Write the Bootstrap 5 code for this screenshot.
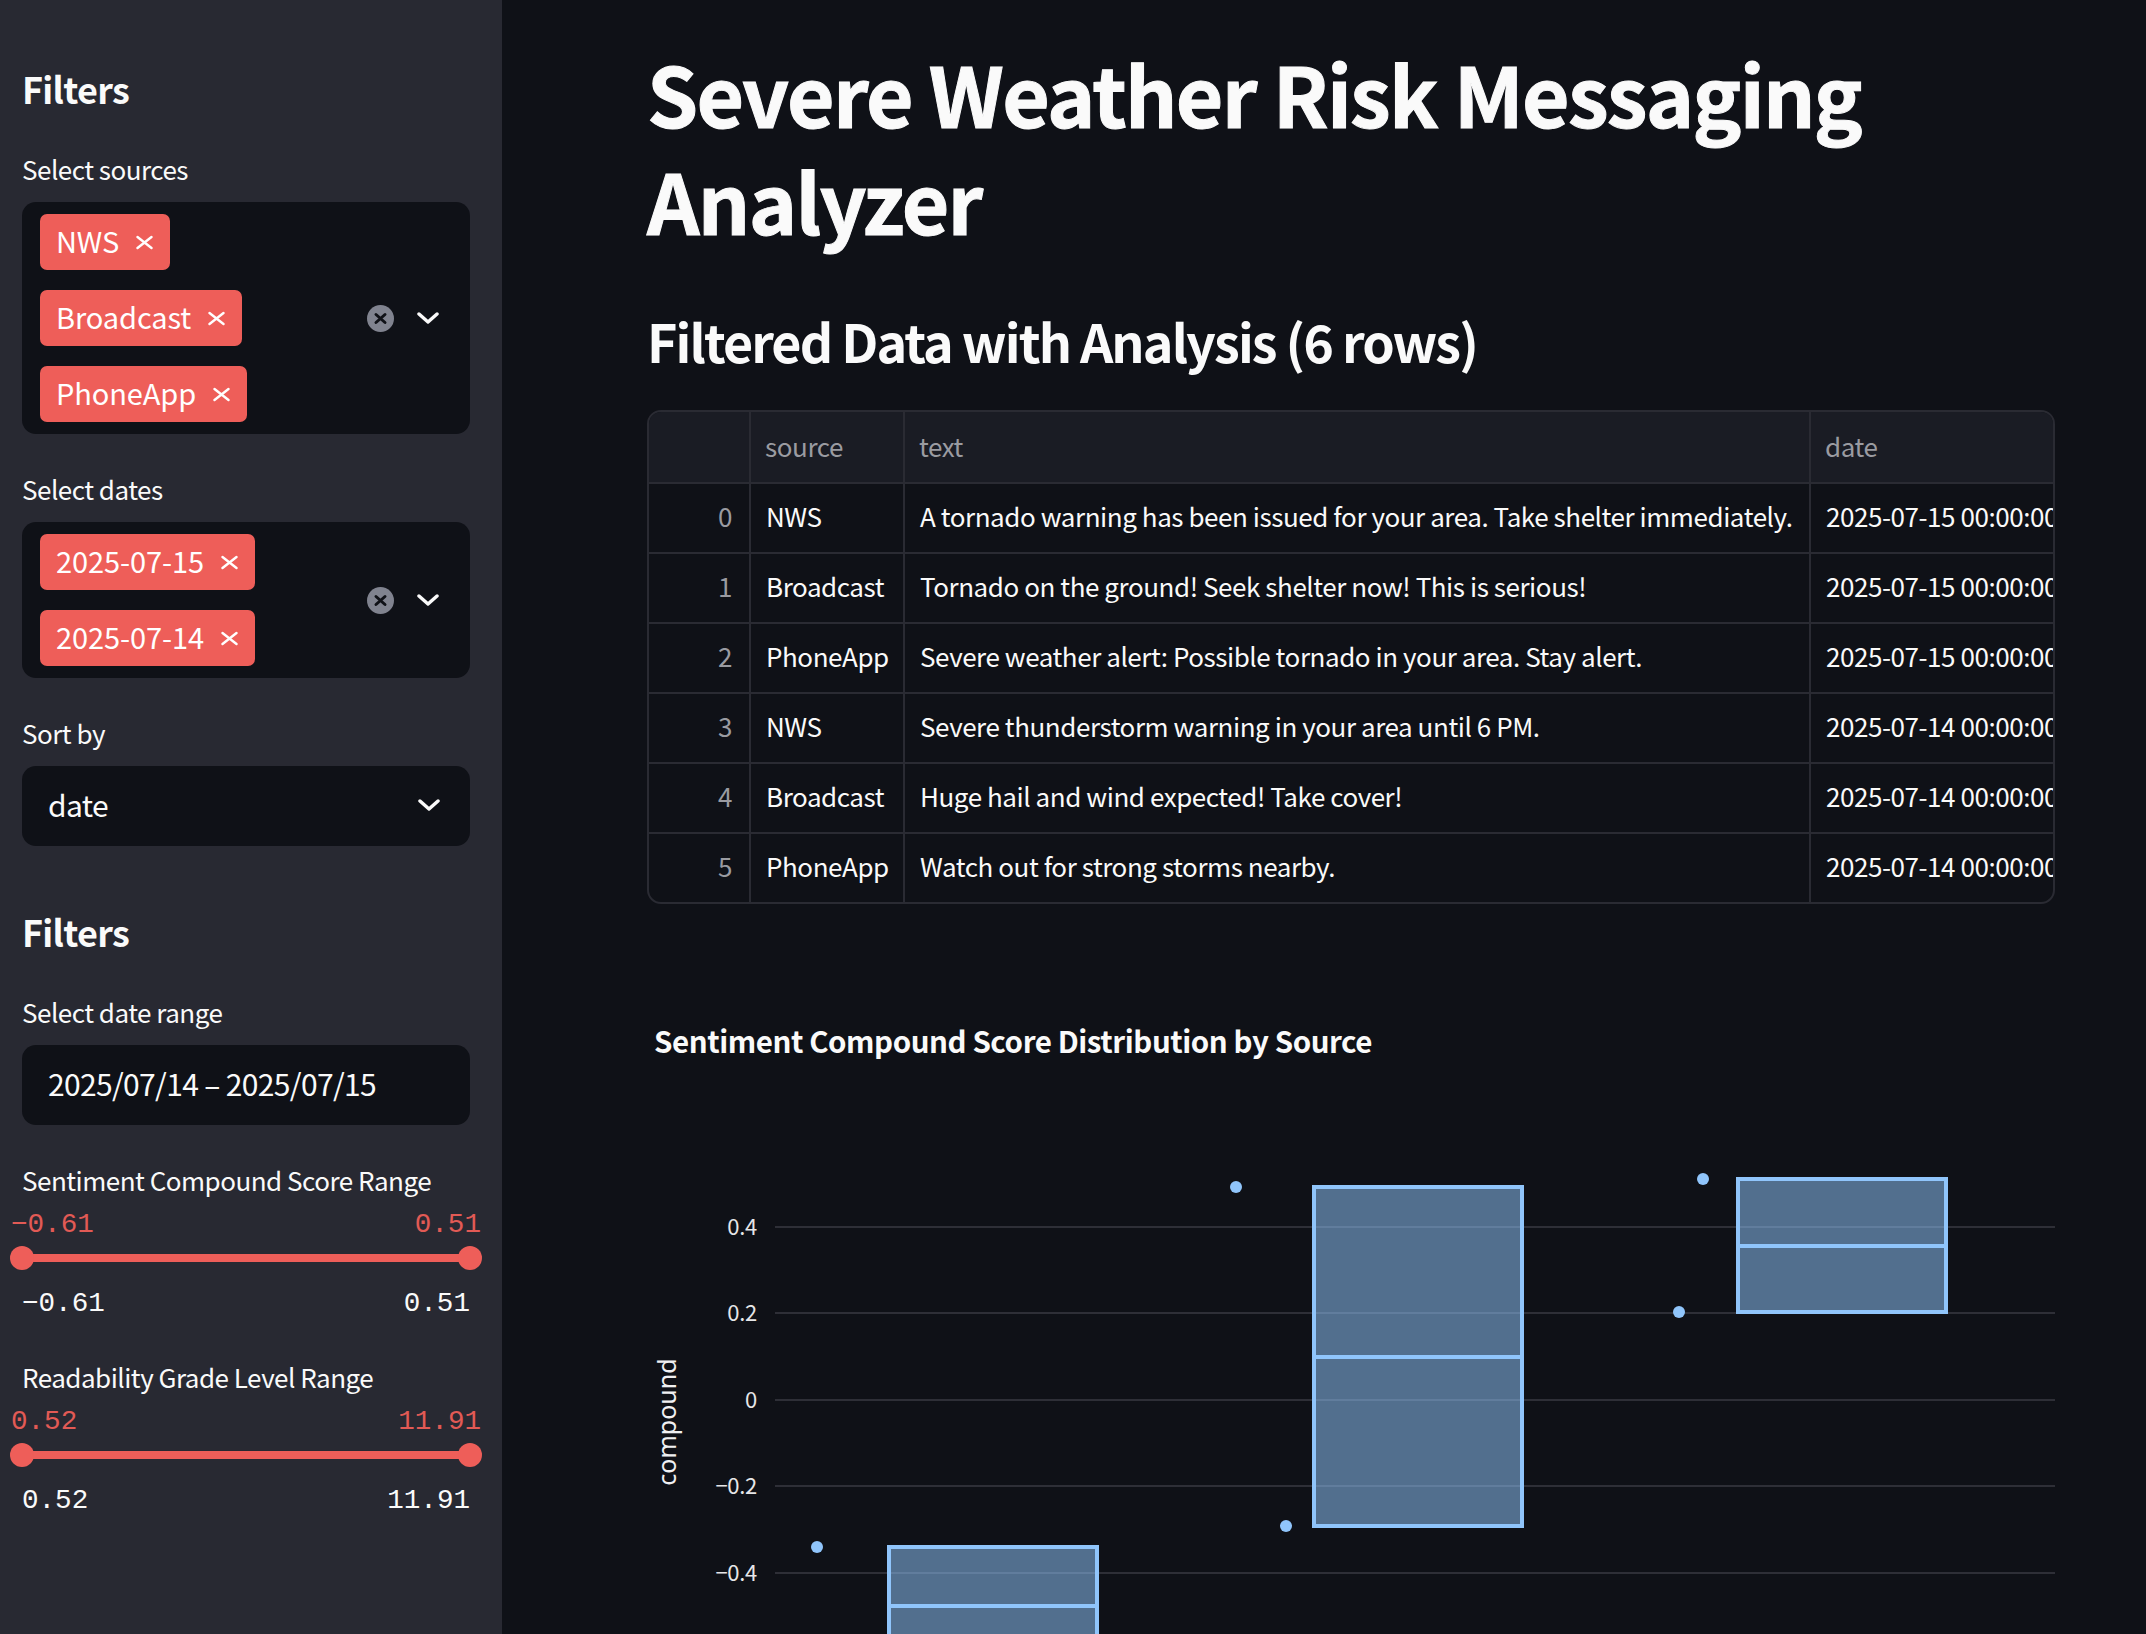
<!DOCTYPE html>
<html lang="en">
<head>
    <meta charset="UTF-8">
    <meta name="viewport" content="width=device-width, initial-scale=1.0">
    <title>Severe Weather Risk Messaging Analyzer</title>
    <link href="https://cdn.jsdelivr.net/npm/bootstrap@5.3.0/dist/css/bootstrap.min.css" rel="stylesheet">
    <style>
        html, body { height: 100%; }
        body { background: #0f1117; color: #fafafa; font-family: "Noto Sans CJK SC", "Noto Sans", sans-serif; overflow: hidden; }
        .side-pane { width: 502px; height: 1634px; flex: none; background: #282932; padding: 61px 32px 0 22px; z-index: 1; }
        .main-pane { flex: 1; min-width: 0; height: 1634px; padding: 39px 91px 0 647px; margin-left: -502px; overflow: hidden; }
        .side-title { font-size: 36px; font-weight: 700; letter-spacing: -0.7px; line-height: 54px; margin: 0 0 37px; }
        .side-title.second { margin: 58px 0 37px; }
        .field-label { font-size: 26px; letter-spacing: -0.5px; line-height: 34px; margin: 0 0 16px; }
        .field-label.spaced { margin-top: 38px; }
        .select-box { background: #0f1117; border-radius: 14px; padding: 12px 18px; }
        .tag-stack { gap: 20px; }
        .pill { background: #ee5e59; color: #fff; border-radius: 7px; height: 56px; padding: 0 17px 2px 16px; font-size: 29px; letter-spacing: -0.1px; gap: 17px; }
        .pill-x { width: 17px; height: 17px; margin-top: 2px; }
        .clear-ico { width: 27px; height: 27px; margin-right: 23px; }
        .chev-ico { width: 22px; height: 14px; margin-right: 13px; }
        .single-box { height: 80px; padding: 0 30px 3px 26px; font-size: 30px; letter-spacing: -0.65px; }
        .range-block { margin-top: 37px; }
        .range-block + .range-block { margin-top: 40px; }
        .range-block .field-label { line-height: 36px; margin-bottom: 12px; }
        .range-head { font-family: "Liberation Mono", monospace; font-size: 27.6px; line-height: 30px; color: #e25a55; margin: 0 -11px; }
        .range-track { height: 8px; background: #ee5e59; margin: 14px 0 0; }
        .range-knob { width: 24px; height: 24px; flex: none; border-radius: 50%; background: #ee5e59; margin: 0 -12px; }
        .range-foot { font-family: "Liberation Mono", monospace; font-size: 27.6px; line-height: 30px; margin-top: 27px; }
        .page-title { font-size: 82px; font-weight: 700; line-height: 107px; letter-spacing: -1.7px; -webkit-text-stroke: 1px #fafafa; margin: 0; }
        .sub-title { font-size: 52px; font-weight: 700; line-height: 72px; letter-spacing: -1.9px; margin: 52px 0 33px; }
        .grid-wrap { width: 1408px; height: 494px; border: 2px solid #2a2b33; border-radius: 14px; overflow: hidden; }
        .data-grid { table-layout: fixed; width: 1408px; margin: 0; --bs-table-bg: transparent; --bs-table-color: #fafafa; border-collapse: collapse; font-size: 26px; letter-spacing: -0.44px; }
        .data-grid th, .data-grid td { border: 2px solid #2a2b33; padding: 0 0 5px 15px; height: 70px; line-height: 1; white-space: nowrap; overflow: hidden; vertical-align: middle; font-weight: 400; border-top: 0; border-left: 0; }
        .data-grid th { background: #1a1c24; color: #9a9ba1; height: 71px; padding: 0 0 3px 14px; }
        .data-grid .row-no { text-align: right; color: #9a9ba1; padding: 0 17px 5px 0; }
        .chart-wrap { margin-top: 94px; margin-left: -647px; }
        .chart-wrap svg { display: block; }
        .chart-title { font-size: 29.5px; font-weight: 700; letter-spacing: -0.43px; fill: #fafafa; font-family: "Noto Sans CJK SC", sans-serif; }
        .chart-tick { font-size: 22px; letter-spacing: -0.3px; fill: #e6e6e8; font-family: "Noto Sans CJK SC", sans-serif; }
        .chart-axis { font-size: 25px; fill: #f0f0f2; font-family: "Noto Sans", sans-serif; }
    </style>
</head>
<body>
    <div class="d-flex">
        <div class="side-pane position-relative">
            <h2 class="side-title">Filters</h2>

            <p class="field-label">Select sources</p>
            <div class="select-box d-flex align-items-center" id="sourceBox"></div>

            <p class="field-label spaced">Select dates</p>
            <div class="select-box d-flex align-items-center" id="dateBox"></div>

            <p class="field-label spaced">Sort by</p>
            <div class="select-box single-box d-flex align-items-center justify-content-between">
                <span>date</span>
                <svg class="chev-ico m-0" viewBox="0 0 22 14"><path d="M2 3l9 8 9-8" fill="none" stroke="#fafafa" stroke-width="3.4" stroke-linecap="round" stroke-linejoin="round"/></svg>
            </div>

            <h2 class="side-title second">Filters</h2>
            <p class="field-label">Select date range</p>
            <div class="select-box single-box d-flex align-items-center">2025/07/14 – 2025/07/15</div>

            <div id="rangeList"></div>
        </div>

        <div class="main-pane">
            <h1 class="page-title">Severe Weather Risk Messaging<br>Analyzer</h1>
            <h3 class="sub-title">Filtered Data with Analysis (6 rows)</h3>
            <div class="grid-wrap">
                <table class="table data-grid">
                    <colgroup><col style="width:101px"><col style="width:154px"><col style="width:906px"><col style="width:247px"></colgroup>
                    <thead><tr><th></th><th>source</th><th>text</th><th>date</th></tr></thead>
                    <tbody id="gridBody"></tbody>
                </table>
            </div>
            <div class="chart-wrap">
                <svg width="2146" height="700" viewBox="0 0 2146 700" id="boxChart"></svg>
            </div>
        </div>
    </div>

    <script src="https://cdn.jsdelivr.net/npm/bootstrap@5.3.0/dist/js/bootstrap.bundle.min.js"></script>
    <script>
        const rows = [
            ['NWS', 'A tornado warning has been issued for your area. Take shelter immediately.', '2025-07-15'],
            ['Broadcast', 'Tornado on the ground! Seek shelter now! This is serious!', '2025-07-15'],
            ['PhoneApp', 'Severe weather alert: Possible tornado in your area. Stay alert.', '2025-07-15'],
            ['NWS', 'Severe thunderstorm warning in your area until 6 PM.', '2025-07-14'],
            ['Broadcast', 'Huge hail and wind expected! Take cover!', '2025-07-14'],
            ['PhoneApp', 'Watch out for strong storms nearby.', '2025-07-14']
        ];
        document.getElementById('gridBody').innerHTML = rows.map((r, i) =>
            `<tr><td class="row-no">${i}</td><td>${r[0]}</td><td>${r[1]}</td><td>${r[2]} 00:00:00</td></tr>`
        ).join('');

        const pillX = '<svg class="pill-x" viewBox="0 0 17 17"><path d="M1.5 3l14 11M15.5 3l-14 11" stroke="#fff" stroke-width="2.4" stroke-linecap="round"/></svg>';
        const controls = `<div class="ms-auto d-flex align-items-center">
            <svg class="clear-ico" viewBox="0 0 27 27"><circle cx="13.5" cy="13.5" r="13.5" fill="#80838f"/><path d="M9 9.5l9 8M18 9.5l-9 8" stroke="#0f1117" stroke-width="3" stroke-linecap="round"/></svg>
            <svg class="chev-ico" viewBox="0 0 22 14"><path d="M2 3l9 8 9-8" fill="none" stroke="#fafafa" stroke-width="3.4" stroke-linecap="round" stroke-linejoin="round"/></svg>
        </div>`;
        function fillBox(id, items) {
            const pills = items.map(t => `<span class="pill d-inline-flex align-items-center">${t}${pillX}</span>`).join('');
            document.getElementById(id).innerHTML = `<div class="tag-stack d-flex flex-column align-items-start">${pills}</div>${controls}`;
        }
        fillBox('sourceBox', ['NWS', 'Broadcast', 'PhoneApp']);
        fillBox('dateBox', ['2025-07-15', '2025-07-14']);

        document.getElementById('rangeList').innerHTML = [
            ['Sentiment Compound Score Range', '−0.61', '0.51'],
            ['Readability Grade Level Range', '0.52', '11.91']
        ].map(s => `<div class="range-block">
            <p class="field-label">${s[0]}</p>
            <div class="range-head d-flex justify-content-between"><span>${s[1]}</span><span>${s[2]}</span></div>
            <div class="range-track d-flex justify-content-between align-items-center"><span class="range-knob"></span><span class="range-knob"></span></div>
            <div class="range-foot d-flex justify-content-between"><span>${s[1]}</span><span>${s[2]}</span></div>
        </div>`).join('');

        // chart coordinates are page pixels minus the top of the svg
        const svg = document.getElementById('boxChart');
        const top0 = 998;
        const yOf = v => v - top0;
        let out = `<text class="chart-title" x="654" y="${yOf(1053)}">Sentiment Compound Score Distribution by Source</text>`;
        [[1227, '0.4'], [1313, '0.2'], [1400, '0'], [1486, '−0.2'], [1573, '−0.4']].forEach(g => {
            out += `<line x1="775" x2="2055" y1="${yOf(g[0])}" y2="${yOf(g[0])}" stroke="#2e2f37" stroke-width="2"/>`;
            out += `<text class="chart-tick" x="757" y="${yOf(g[0]) + 8}" text-anchor="end">${g[1]}</text>`;
        });
        out += `<text class="chart-axis" transform="translate(676 ${yOf(1422)}) rotate(-90)" text-anchor="middle">compound</text>`;
        [[889, 1097, 1547, 1606, 1700], [1314, 1522, 1187, 1357, 1526], [1738, 1946, 1179, 1246, 1312]].forEach(b => {
            out += `<rect x="${b[0]}" y="${yOf(b[2])}" width="${b[1] - b[0]}" height="${b[4] - b[2]}" fill="#90c5fb" fill-opacity="0.52" stroke="#90c5fb" stroke-width="4"/>`;
            out += `<line x1="${b[0]}" x2="${b[1]}" y1="${yOf(b[3])}" y2="${yOf(b[3])}" stroke="#90c5fb" stroke-width="4"/>`;
        });
        [[817, 1547], [1236, 1187], [1286, 1526], [1703, 1179], [1679, 1312]].forEach(d => {
            out += `<circle cx="${d[0]}" cy="${yOf(d[1])}" r="6" fill="#90c5fb"/>`;
        });
        svg.innerHTML = out;
    </script>
</body>
</html>
